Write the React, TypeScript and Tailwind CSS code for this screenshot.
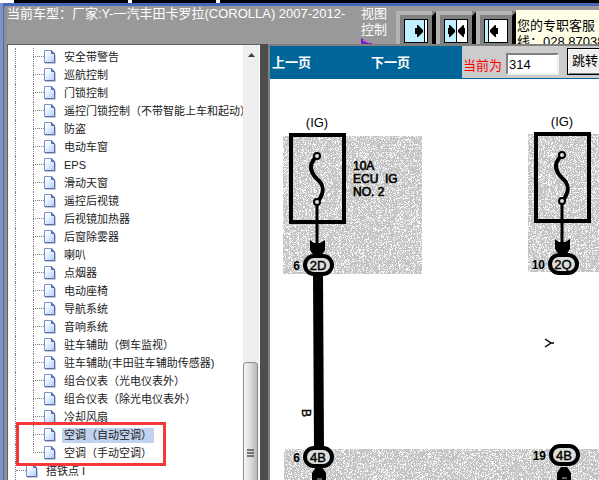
import React, { useState } from 'react';
import clsx from 'clsx';

const ITEMS = [
  '安全带警告',
  '巡航控制',
  '门锁控制',
  '遥控门锁控制（不带智能上车和起动）',
  '防盗',
  '电动车窗',
  'EPS',
  '滑动天窗',
  '遥控后视镜',
  '后视镜加热器',
  '后窗除雾器',
  '喇叭',
  '点烟器',
  '电动座椅',
  '导航系统',
  '音响系统',
  '驻车辅助（倒车监视）',
  '驻车辅助(丰田驻车辅助传感器)',
  '组合仪表（光电仪表外）',
  '组合仪表（除光电仪表外）',
  '冷却风扇',
];

const AIRCON_ITEMS = ['空调（自动空调）', '空调（手动空调）'];

const PageIcon = () => (
  <svg width="12" height="15" viewBox="0 0 12 15" className="shrink-0">
    <defs>
      <linearGradient id="paper" x1="0" y1="0" x2="1" y2="1">
        <stop offset="0.2" stopColor="#ffffff" />
        <stop offset="1" stopColor="#a9cefb" />
      </linearGradient>
    </defs>
    <path d="M1 13.5h10.500v-9" fill="none" stroke="#c9c9cf" />
    <path d="M0.500 0.500h7l3 3v9h-10z" fill="url(#paper)" stroke="#7a93cf" />
    <path d="M10.500 4v8.500H1" fill="none" stroke="#5a6aa8" />
    <path d="M7.500 0.500v3h3z" fill="#7083c0" stroke="#5a6cae" />
  </svg>
);

interface TreeRowProps {
  label: string;
  selected?: boolean;
  last?: boolean;
  onSelect: (label: string) => void;
}

const TreeRow: React.FC<TreeRowProps> = ({
  label,
  selected,
  last,
  onSelect,
}) => (
  <li className="flex h-[18px] items-center pl-[7px]">
    <span className="h-full w-[18px] shrink-0 border-l border-dotted border-[#808080]" />
    <span className="flex h-full w-[11px] shrink-0 flex-col">
      <span className="h-[9px] border-b border-l border-dotted border-[#808080]" />
      <span
        className={clsx(
          'h-[9px]',
          !last && 'border-l border-dotted border-[#808080]',
        )}
      />
    </span>
    <PageIcon />
    <button
      onClick={() => onSelect(label)}
      className={clsx(
        'ml-[6px] h-[15px] whitespace-nowrap px-[2px] text-left leading-[15px]',
        selected && 'bg-[#c1d2ee]',
      )}
    >
      {label}
    </button>
  </li>
);

const ScrollBar = () => (
  <div className="flex w-[17px] shrink-0 flex-col border-r border-white bg-[#efefef]">
    <svg width="16" height="18" viewBox="0 0 16 18" className="shrink-0">
      <path d="M5 12h7l-3.500-4z" fill="#404040" />
    </svg>
    <div className="flex-[300]" />
    <div className="mr-px flex flex-[117] flex-col items-center justify-center rounded-t-sm border border-b-0 border-[#8f8f8f] bg-gradient-to-r from-[#f5f5f5] via-[#dcdcdc] to-[#b9b9bb]">
      <svg width="8" height="9" viewBox="0 0 8 9" className="mt-16">
        <path d="M0 1h7M0 4h7M0 7h7" stroke="#505050" strokeWidth="1.500" />
      </svg>
    </div>
  </div>
);

interface LayoutButtonProps {
  label: string;
  children: React.ReactNode;
}

const LayoutButton: React.FC<LayoutButtonProps> = ({ label, children }) => (
  <button
    aria-label={label}
    className="h-[34px] w-[40px] shrink-0 overflow-hidden bg-[#808080]"
  >
    <svg width="40" height="34" viewBox="0 0 40 34">
      <path d="M0 0h36v4h-32v30h-4z" fill="#b4b4b4" />
      <path d="M40 1v33h-4v-29z" fill="#000" />
      <rect x="8.500" y="8.500" width="23" height="23" fill="#fff" stroke="#000" />
      {children}
    </svg>
  </button>
);

const Header = () => (
  <header className="flex h-[38px] shrink-0 overflow-hidden bg-[#999] text-[13px] text-white">
    <h1 className="w-[354px] shrink-0 whitespace-nowrap leading-[16px]">
      当前车型：厂家:Y-一汽丰田卡罗拉(COROLLA) 2007-2012-
    </h1>
    <div className="w-[35px] shrink-0 leading-[16px]">
      <p className="w-[28px]">视图控制</p>
      <svg width="14" height="6" viewBox="0 0 14 6">
        <path d="M0 0l12 6h-12z" fill="#7a1fb8" />
        <path d="M2 2l7 3" stroke="#c79be6" />
      </svg>
    </div>
    <div className="flex shrink-0 pt-[5px]">
      <LayoutButton label="左侧展开">
        <path d="M9 9h19v22h-19z" fill="#c0f0ff" />
        <path d="M28.500 9v22" stroke="#000" />
        <path d="M19 17h2v-3h1l5 5v2l-5 5h-1v-3h-2z" fill="#000" />
      </LayoutButton>
      <LayoutButton label="左右均分">
        <path d="M9 9h11v22h-11z" fill="#c0f0ff" />
        <path d="M20.500 9v22" stroke="#000" />
        <path d="M12 17h1v-3h1l5 5v2l-5 5h-1v-3h-1z" fill="#000" />
        <path d="M29 17h-1v-3h-1l-5 5v2l5 5h1v-3h1z" fill="#000" />
      </LayoutButton>
      <LayoutButton label="右侧展开">
        <path d="M9 9h3v22h-3z" fill="#c0f0ff" />
        <path d="M12.500 9v22" stroke="#000" />
        <path d="M22 17h-2v-3h-1l-5 5v2l5 5h1v-3h2z" fill="#000" />
      </LayoutButton>
    </div>
    <div className="mt-1 min-w-0 flex-1 overflow-hidden whitespace-nowrap bg-[#ffffe8] pl-px pt-2 leading-[16px] text-black">
      <p>您的专职客服</p>
      <p>线：028.87038</p>
    </div>
  </header>
);

interface ConnectorProps {
  x: number;
  y: number;
  pin: string;
  label: string;
}

const Connector: React.FC<ConnectorProps> = ({ x, y, pin, label }) => (
  <g transform={`translate(${x} ${y})`}>
    <rect
      x="-13"
      y="-9"
      width="27"
      height="18"
      rx="9"
      fill="#ddd"
      stroke="#000"
      strokeWidth="4"
    />
    <text
      x="0"
      y="5"
      textAnchor="middle"
      fontSize="13"
      stroke="#000"
      strokeWidth="0.400"
    >
      {label}
    </text>
    <text x="-18" y="5" textAnchor="end" fontSize="12" fontWeight="bold">
      {pin}
    </text>
  </g>
);

interface FuseProps {
  x: number;
  y: number;
  pin: string;
  connector: string;
}

const Fuse: React.FC<FuseProps> = ({ x, y, pin, connector }) => (
  <g transform={`translate(${x} ${y})`}>
    <text x="0" y="-8" textAnchor="middle" fontSize="13">
      (IG)
    </text>
    <rect
      x="-26"
      y="0"
      width="53"
      height="87"
      fill="none"
      stroke="#000"
      strokeWidth="4"
    />
    <path
      d="M-2 23C-9 31 -6 38 0 44C7 50 8 56 2 65"
      fill="none"
      stroke="#000"
      strokeWidth="4"
    />
    <circle cx="0" cy="21" r="3" fill="#ddd" stroke="#000" strokeWidth="2" />
    <circle cx="0" cy="67" r="3" fill="#ddd" stroke="#000" strokeWidth="2" />
    <path d="M0 70V110" stroke="#000" strokeWidth="3" />
    <path d="M-7 105l4 3h6l5-3v10l-4 6h-7l-4-6z" fill="#000" />
    <Connector x={1} y={130} pin={pin} label={connector} />
  </g>
);

const WiringDiagram = () => (
  <svg
    className="block h-full w-full font-['Liberation_Sans',sans-serif]"
    role="img"
    aria-label="电路图"
  >
    <defs>
      <filter id="halftone" x="0" y="0" width="100%" height="100%">
        <feTurbulence
          type="fractalNoise"
          baseFrequency="1.370"
          numOctaves="2"
          seed="4"
        />
        <feColorMatrix values="0 0 0 0 1  0 0 0 0 1  0 0 0 0 1  14 0 0 0 -7.600" />
        <feComposite in2="SourceGraphic" operator="in" result="dots" />
        <feMerge>
          <feMergeNode in="SourceGraphic" />
          <feMergeNode in="dots" />
        </feMerge>
      </filter>
    </defs>

    <g fill="#c4c4c4" filter="url(#halftone)">
      <rect x="13" y="57" width="139" height="138" />
      <rect x="258" y="55" width="100%" height="138" />
      <rect x="14" y="370" width="100%" height="100%" />
    </g>

    <path d="M43 196h10l1 174h-10z" fill="#000" />
    <Fuse x={47} y={56} pin="6" connector="2D" />
    <Fuse x={292} y={55} pin="10" connector="2Q" />

    <g fontSize="12" stroke="#000" strokeWidth="0.600">
      <text x="83" y="91">10A</text>
      <text x="83" y="104">ECU&#160;&#160;IG</text>
      <text x="83" y="117">NO. 2</text>
    </g>
    <text
      transform="translate(32 330) rotate(90)"
      fontSize="12"
      stroke="#000"
      strokeWidth="0.400"
    >
      B
    </text>
    <path
      d="M275 260l6 4l-6 4M281 264h3"
      fill="none"
      stroke="#000"
      strokeWidth="1.500"
    />

    <path d="M42 420v-26l4-6h6l4 6v26z" fill="#000" />
    <path d="M287 420v-26l4-6h6l4 6v26z" fill="#000" />
    <path d="M47 400h5M292 399h5" stroke="#bbb" />
    <Connector x={48} y={378} pin="6" label="4B" />
    <Connector x={294} y={376} pin="19" label="4B" />
  </svg>
);

const App = () => {
  const [selected, setSelected] = useState(AIRCON_ITEMS[0]);
  const [page, setPage] = useState('314');

  return (
    <div className="flex h-screen flex-col overflow-hidden bg-white font-['Liberation_Sans','Noto_Sans_CJK_SC',sans-serif]">
      <div className="flex h-[3px] shrink-0 gap-1 bg-white pl-[14px]">
        <span className="w-[114px] bg-black" />
        <span className="w-[84px] bg-black" />
        <span className="flex-1 bg-black" />
      </div>
      <div className="flex min-h-0 flex-1 border-l-[3px] border-[#8093c3]">
        <div className="flex min-w-0 flex-1 flex-col border-l border-t-[3px] border-[#4468c0]">
          <div className="flex min-h-0 flex-1 flex-col border-l-[3px] border-[#909090]">
            <Header />

            <div className="flex min-h-0 flex-1 bg-[#4d4d4d]">
              <nav className="flex w-[253px] shrink-0 border-l border-t border-[#606060] bg-white">
                <ul className="min-w-0 flex-1 overflow-hidden pt-[3px] text-[11px] text-[#222]">
                  {ITEMS.map((label) => (
                    <TreeRow
                      key={label}
                      label={label}
                      selected={selected === label}
                      onSelect={setSelected}
                    />
                  ))}
                  <li className="relative">
                    <ul>
                      {AIRCON_ITEMS.map((label, i) => (
                        <TreeRow
                          key={label}
                          label={label}
                          selected={selected === label}
                          last={i === AIRCON_ITEMS.length - 1}
                          onSelect={setSelected}
                        />
                      ))}
                    </ul>
                    <span className="pointer-events-none absolute -bottom-1 -top-1 left-2 w-[150px] border-[3px] border-[#f83838]" />
                  </li>
                  <li className="flex h-[18px] items-center pl-[7px]">
                    <span className="flex h-full w-[11px] shrink-0 flex-col border-l border-dotted border-[#808080]">
                      <span className="h-[9px] border-b border-dotted border-[#808080]" />
                    </span>
                    <PageIcon />
                    <button
                      onClick={() => setSelected('搭铁点 I')}
                      className="ml-[6px] px-[2px] leading-[15px]"
                    >
                      搭铁点 I
                    </button>
                  </li>
                </ul>
                <ScrollBar />
              </nav>

              <main className="ml-2 flex min-w-0 flex-1 flex-col border-l-2 border-t-2 border-[#808080] bg-white">
                <div className="flex h-[33px] shrink-0 items-stretch overflow-hidden bg-[#006699] text-[13px]">
                  <div className="flex w-[192px] shrink-0 items-center gap-[60px] pl-[2px] font-bold text-white">
                    <a href="#prev">上一页</a>
                    <a href="#next">下一页</a>
                  </div>
                  <form
                    onSubmit={(e) => e.preventDefault()}
                    className="mb-px flex flex-1 bg-[#ccc] pl-px pt-[2px]"
                  >
                    <label
                      htmlFor="page"
                      className="w-[43px] shrink-0 pt-2 leading-[20px] text-[#f00]"
                    >
                      当前为
                    </label>
                    <input
                      id="page"
                      value={page}
                      onChange={(e) => setPage(e.target.value)}
                      className="mt-[5px] h-[22px] w-[53px] shrink-0 border-2 border-b-[#eee] border-l-[#808080] border-r-[#eee] border-t-[#808080] bg-white px-px text-black"
                    />
                    <button className="ml-2 h-[27px] min-w-0 flex-1 whitespace-nowrap border border-r-0 border-black bg-[#f0f0f0] pb-px pl-1 text-left text-black shadow-[inset_1px_1px_0_#fff,inset_0_-1px_0_#808080]">
                      跳转
                    </button>
                  </form>
                </div>
                <div className="min-h-0 flex-1">
                  <WiringDiagram />
                </div>
              </main>
            </div>
          </div>
        </div>
      </div>
    </div>
  );
};

export default App;
